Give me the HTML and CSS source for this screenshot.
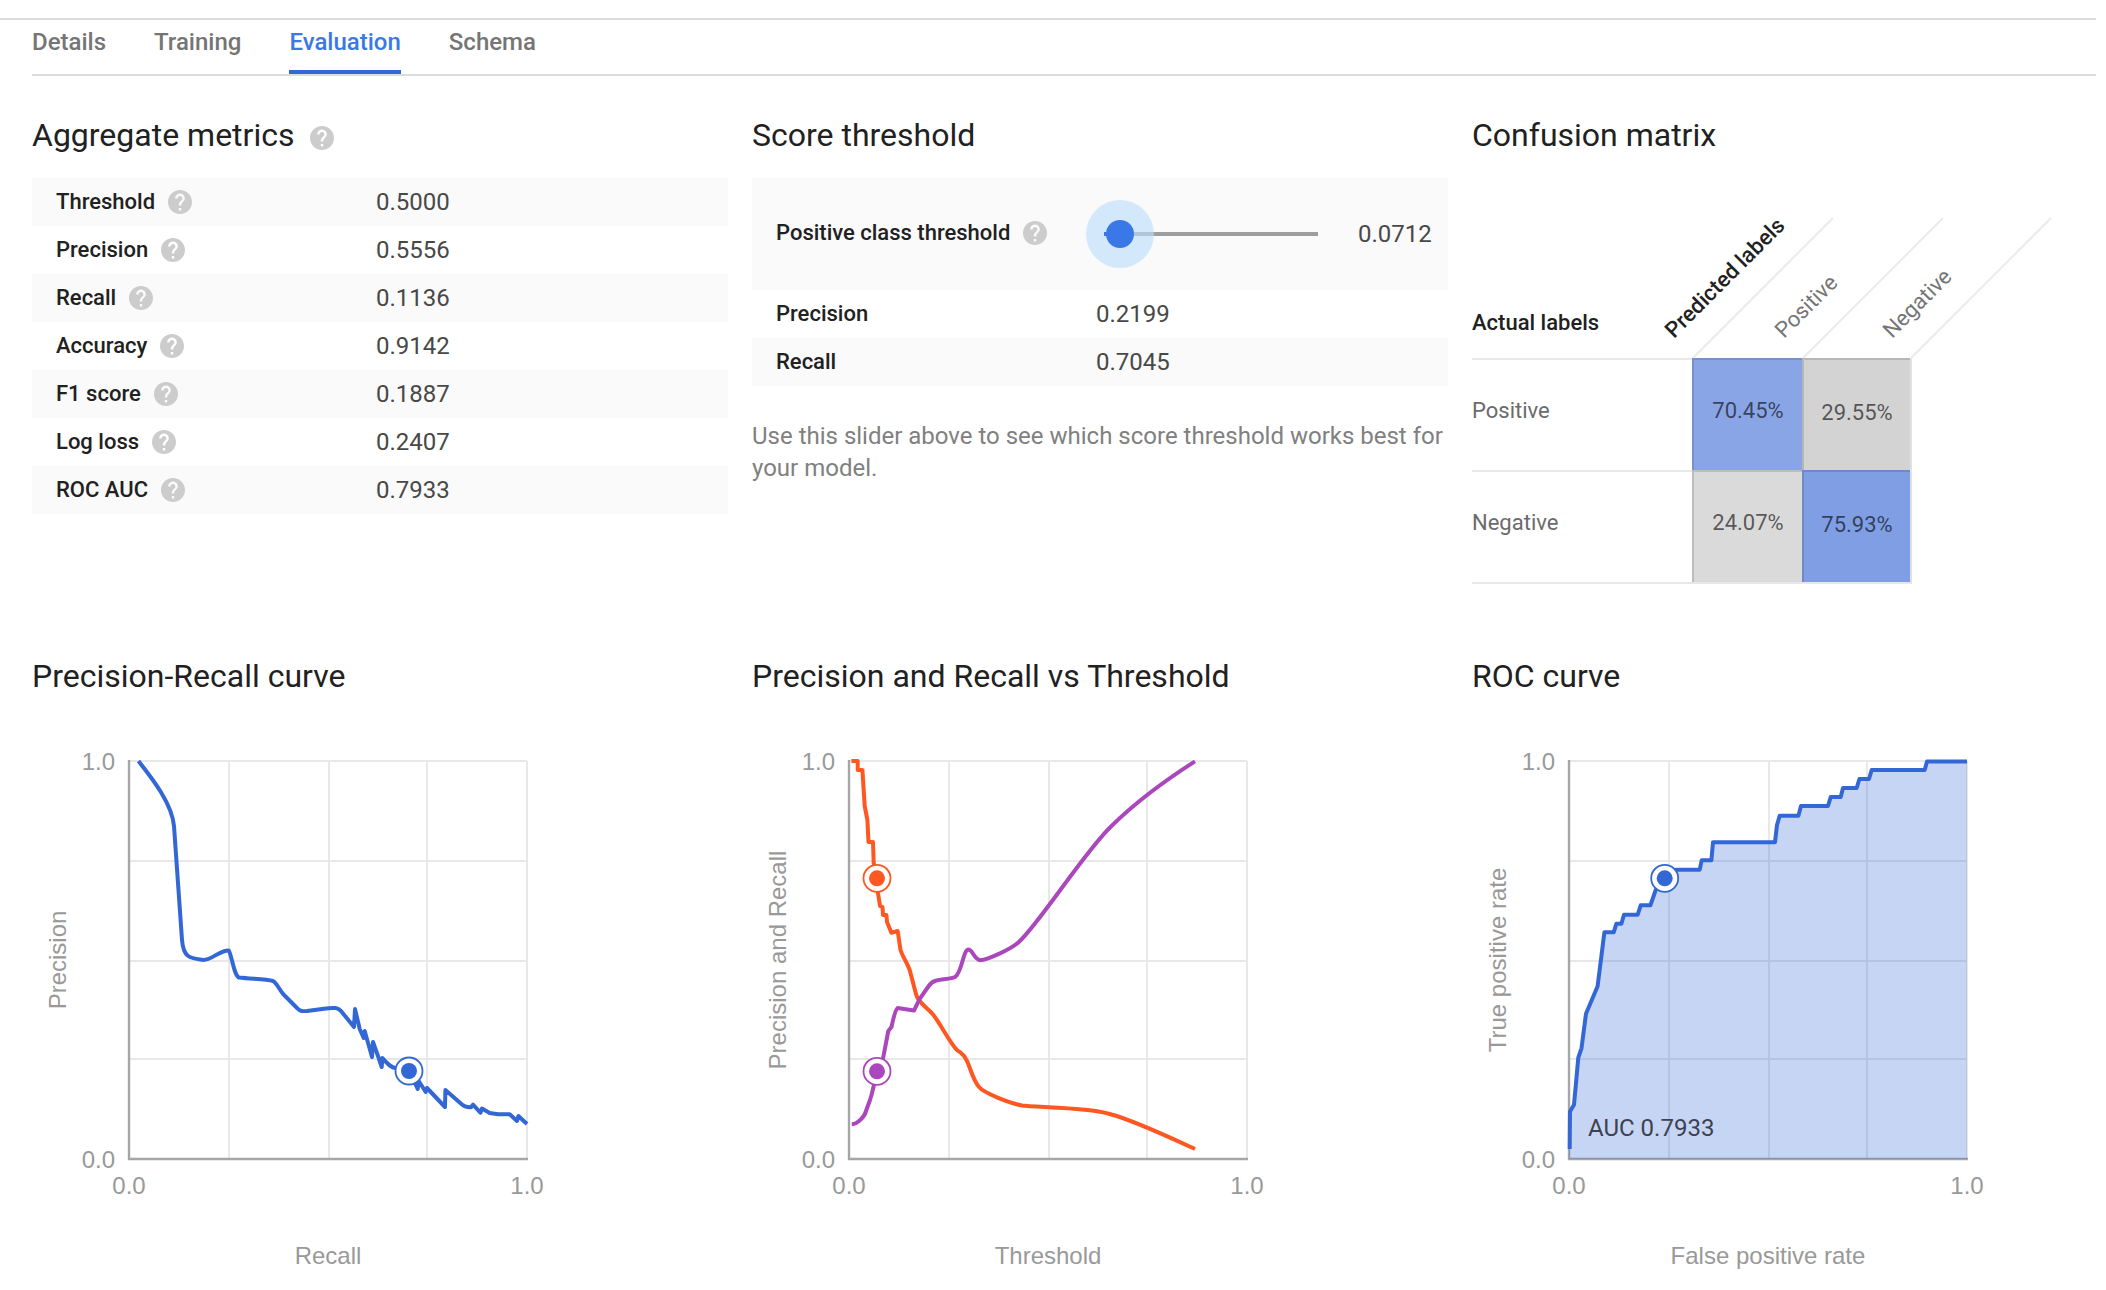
FILE: index.html
```html
<!DOCTYPE html>
<html lang="en">
<head>
<meta charset="utf-8">
<title>Model evaluation</title>
<link rel="stylesheet" href="styles.css">
</head>
<body>
<svg class="defs" aria-hidden="true">
  <symbol id="help" viewBox="2 2 20 20"><path d="M12 2C6.48 2 2 6.48 2 12s4.480 10 10 10 10-4.480 10-10S17.520 2 12 2zm1 17h-2v-2h2v2zm2.070-7.750l-.9.920C13.450 12.900 13 13.500 13 15h-2v-.5c0-1.100.45-2.100 1.170-2.830l1.240-1.260c.370-.360.590-.860.590-1.410 0-1.100-.9-2-2-2s-2 .9-2 2H8c0-2.210 1.790-4 4-4s4 1.790 4 4c0 .880-.360 1.680-.930 2.250z"/></symbol>
  <symbol id="plot" overflow="visible">
    <path class="grid" d="M0 0H398M0 100H398M0 200H398M0 298H398M100 0V398M200 0V398M298 0V398M398 0V398"/>
    <path class="axis" d="M0 -1V399M-1 398H399"/>
  </symbol>
</svg>

<main class="page">
  <nav class="tabs">
    <a class="tab">Details</a>
    <a class="tab">Training</a>
    <a class="tab active">Evaluation</a>
    <a class="tab">Schema</a>
  </nav>

  <div class="panels">
    <section>
      <h2>Aggregate metrics <svg class="help"><use href="#help"/></svg></h2>
      <dl class="table">
        <div class="row"><dt>Threshold <svg class="help"><use href="#help"/></svg></dt><dd>0.5000</dd></div>
        <div class="row"><dt>Precision <svg class="help"><use href="#help"/></svg></dt><dd>0.5556</dd></div>
        <div class="row"><dt>Recall <svg class="help"><use href="#help"/></svg></dt><dd>0.1136</dd></div>
        <div class="row"><dt>Accuracy <svg class="help"><use href="#help"/></svg></dt><dd>0.9142</dd></div>
        <div class="row"><dt>F1 score <svg class="help"><use href="#help"/></svg></dt><dd>0.1887</dd></div>
        <div class="row"><dt>Log loss <svg class="help"><use href="#help"/></svg></dt><dd>0.2407</dd></div>
        <div class="row"><dt>ROC AUC <svg class="help"><use href="#help"/></svg></dt><dd>0.7933</dd></div>
      </dl>
    </section>

    <section>
      <h2>Score threshold</h2>
      <dl class="table">
        <div class="row tall">
          <dt>Positive class threshold <svg class="help"><use href="#help"/></svg></dt>
          <dd class="slider-cell">
            <svg class="slider" viewBox="0 0 232 68">
              <path class="track" d="M18 34H232"/>
              <circle class="halo" cx="34" cy="34" r="34"/>
              <path class="filled" d="M18 34H34"/>
              <circle class="knob" cx="34" cy="34" r="14"/>
            </svg>
            <span>0.0712</span>
          </dd>
        </div>
        <div class="row"><dt>Precision</dt><dd>0.2199</dd></div>
        <div class="row"><dt>Recall</dt><dd>0.7045</dd></div>
      </dl>
      <p class="hint">Use this slider above to see which score threshold works best for your model.</p>
    </section>

    <section>
      <h2>Confusion matrix</h2>
      <div class="matrix">
        <svg class="matrix-head" viewBox="0 0 600 182">
          <path class="slant" d="M221 182L361 42M331 182L471 42M439 182L579 42"/>
          <text class="strong" x="0" y="154">Actual labels</text>
          <text class="strong" transform="translate(202 163) rotate(-45)">Predicted labels</text>
          <text transform="translate(312 163) rotate(-45)">Positive</text>
          <text transform="translate(420 163) rotate(-45)">Negative</text>
        </svg>
        <div class="matrix-row"><span class="name">Positive</span><span class="cell hit-70">70.45%</span><span class="cell last miss-29">29.55%</span></div>
        <div class="matrix-row"><span class="name">Negative</span><span class="cell miss-24">24.07%</span><span class="cell last hit-75">75.93%</span></div>
      </div>
    </section>
  </div>

  <div class="panels charts">
    <section>
      <h2>Precision-Recall curve</h2>
      <svg class="chart" viewBox="-97 -65 640 590">
        <use href="#plot"/>
        <path class="line blue" d="M9.500 0C22 16 43 42 45 65L53 179C54.500 196 60 197.500 74.300 199C83 199 90 189.400 99.600 189.400C102 191 105 215 110 216.500C122 218 137 218 144 220C148 222 151 230 154.600 233.500L168 247C171 250.500 174 250.300 178 250L195 247.700C206 246 209 247 212 250L225 266L226 248L230.700 268L234.700 277L235.700 270L243 296L244 281L249 295L252.700 306L253.400 297C259 303 262 307 267 307L280 310L288.700 328L289.700 320L296.700 331L298 327L316 346L316.400 329L333 343.500C336 346 339 346.500 342 346.300L344 343.700L351.400 351.700L353 347.500L360.700 352L369 353.300H380.700L388 360L389.400 355L398 363"/>
        <g class="marker blue" transform="translate(280 310)"><circle class="ring" r="13.500"/><circle class="dot" r="8"/></g>
        <text class="y-tick" x="-14" y="9">1.0</text>
        <text class="y-tick" x="-14" y="407">0.0</text>
        <text class="title" x="0" y="433">0.0</text>
        <text class="title" x="398" y="433">1.0</text>
        <text class="title" x="199" y="503">Recall</text>
        <text class="title" transform="translate(-63 199) rotate(-90)">Precision</text>
      </svg>
    </section>

    <section>
      <h2>Precision and Recall vs Threshold</h2>
      <svg class="chart" viewBox="-97 -65 640 590">
        <use href="#plot"/>
        <path class="line orange" d="M2.400 0H8.700V9H13.400L15.700 45L18.400 59L19.500 81H24L24.700 102L28 117L29 132L31 145L33.500 146L34 154H37.400L38 161L42.400 171.700L48.700 170L51.500 189C54 197 58 201 60.700 209L67 233C69 242 78 246 84 253.500C91 262 101 282 108 289C113 293 115 293 118 300C121 306 124 319 130 326C135 332 160 342 173 344.500C186 346.500 242 346 262.500 353.500C286 360 320 376 346 388"/>
        <path class="line purple" d="M2.800 363.300C9 363 16 355 17 350L21 339L22.500 334L28.200 311L34 297.600L39.300 270L42.500 266C44 259 46 249 48.600 247L65 249.600L70.400 238.400L79 226C81 223 83 220.800 86 220C93 217.500 101 218.500 106 216C113 212 114 188.600 119.500 188.600C124 189 125 198.500 131 199.200C139 199 162 188 169.600 181.200C190 163 236 90 262.500 65C288 40 320 17 346 .4"/>
        <g class="marker orange" transform="translate(28 117.300)"><circle class="ring" r="13.500"/><circle class="dot" r="8"/></g>
        <g class="marker purple" transform="translate(28 310.300)"><circle class="ring" r="13.500"/><circle class="dot" r="8"/></g>
        <text class="y-tick" x="-14" y="9">1.0</text>
        <text class="y-tick" x="-14" y="407">0.0</text>
        <text class="title" x="0" y="433">0.0</text>
        <text class="title" x="398" y="433">1.0</text>
        <text class="title" x="199" y="503">Threshold</text>
        <text class="title" transform="translate(-63 199) rotate(-90)">Precision and Recall</text>
      </svg>
    </section>

    <section>
      <h2>ROC curve</h2>
      <svg class="chart" viewBox="-97 -65 640 590">
        <use href="#plot"/>
        <path class="area" d="M0 398V388L1 350.600L5 343.700L7 322L9.300 296.700L12.500 287.300L17 252.700L28.600 225.300L35.400 171.300H44.700L47.400 162.700H52.400L55 153.700H68.700L71.700 144.300H81.400L86.700 129L95.700 117.300L107.400 108.700H130.700L132.700 99.300H142.400L144 81.300H206L208 64L210.700 54.700H229.400L232 45H259L261.700 36H271.700L274 27H287.700L290.400 18H300L302.700 9H355.700L358 0H398V398Z"/>
        <path class="line blue" d="M.7 388L1 350.600L5 343.700L7 322L9.300 296.700L12.500 287.300L17 252.700L28.600 225.300L35.400 171.300H44.700L47.400 162.700H52.400L55 153.700H68.700L71.700 144.300H81.400L86.700 129L95.700 117.300L107.400 108.700H130.700L132.700 99.300H142.400L144 81.300H206L208 64L210.700 54.700H229.400L232 45H259L261.700 36H271.700L274 27H287.700L290.400 18H300L302.700 9H355.700L358 .4H398"/>
        <g class="marker blue" transform="translate(95.700 117.300)"><circle class="ring" r="13.500"/><circle class="dot" r="8"/></g>
        <text class="auc" x="19" y="375">AUC 0.7933</text>
        <text class="y-tick" x="-14" y="9">1.0</text>
        <text class="y-tick" x="-14" y="407">0.0</text>
        <text class="title" x="0" y="433">0.0</text>
        <text class="title" x="398" y="433">1.0</text>
        <text class="title" x="199" y="503">False positive rate</text>
        <text class="title" transform="translate(-63 199) rotate(-90)">True positive rate</text>
      </svg>
    </section>
  </div>
</main>
</body>
</html>
```
FILE: styles.css
```css
* { box-sizing: border-box; }
body {
  margin: 0;
  padding-top: 18px;
  background: #fff;
  color: #212121;
  font-family: Roboto, sans-serif;
  font-size: 24px;
  overflow: hidden;
}
.defs { display: none; }
.page { width: 2096px; border-top: 2px solid #dcdcdc; }

.tabs {
  display: flex;
  gap: 48px;
  height: 56px;
  margin-left: 32px;
  border-bottom: 2px solid #dcdcdc;
}
.tab {
  height: 54px;
  padding-top: 6px;
  line-height: 32px;
  font-weight: 500;
  color: #757575;
}
.tab.active { color: #3b78e7; border-bottom: 4px solid #3367d6; }

.panels {
  display: grid;
  grid-template-columns: 696px 696px 624px;
  column-gap: 24px;
  height: 541px;
  padding: 39px 0 0 32px;
}
.charts { height: auto; }
h2 {
  display: flex;
  align-items: center;
  height: 40px;
  margin: 0;
  font-size: 32px;
  font-weight: 400;
  line-height: 40px;
}
.help { flex: none; width: 24px; height: 24px; margin-left: 13px; fill: #ccc; }
h2 .help { margin: 5px 0 0 16px; }

.table { margin: 23px 0 0; }
.row { display: flex; align-items: center; height: 48px; padding-left: 24px; }
.row:nth-child(odd) { background: #fafafa; }
.row dt {
  display: flex;
  align-items: center;
  width: 320px;
  height: 48px;
  font-size: 22px;
  font-weight: 500;
  line-height: 48px;
}
.row dd { margin: 0; color: #484848; line-height: 46px; }
.row.tall { height: 112px; }
.row.tall dt { width: 310px; padding-bottom: 2px; height: 50px; }
.slider-cell { display: flex; align-items: center; }
.slider { width: 232px; height: 68px; margin-right: 40px; }
.slider-cell span { line-height: 48px; }
.track { stroke: #9e9e9e; stroke-width: 4; }
.halo { fill: #bbdefb; fill-opacity: .62; }
.filled { stroke: #3b78e7; stroke-width: 4; }
.knob { fill: #3b78e7; }
.hint { margin: 34px 0 0; color: #808080; line-height: 32px; }

.matrix { width: 624px; margin-top: 21px; font-size: 22px; color: #6b6b6b; }
.matrix-head { display: block; width: 600px; height: 182px; overflow: visible; fill: #757575; }
.matrix-head .strong { fill: #212121; font-weight: 500; }
.slant { fill: none; stroke: #ebebeb; stroke-width: 2; }
.matrix-row {
  display: grid;
  grid-template-columns: 220px 110px 108px;
  width: 440px;
  height: 112px;
  border-top: 2px solid #e8e8e8;
  border-right: 2px solid #e0e0e0;
}
.matrix-row:last-child { height: 114px; border-bottom: 2px solid #e8e8e8; }
.name { line-height: 102px; }
.cell {
  margin-top: -2px;
  border: solid rgba(0, 0, 0, .13);
  border-width: 2px 0 0 2px;
  text-align: center;
  line-height: 102px;
  color: rgba(0, 0, 0, .62);
}
.cell.last { line-height: 106px; }
.hit-70 { background: #8aa5e6; }
.miss-29 { background: #d3d3d3; }
.miss-24 { background: #dadada; }
.hit-75 { background: #7f9ee4; }

.chart { display: block; width: 640px; height: 590px; overflow: visible; }
.chart text { font: 24px "Liberation Sans", Arial, sans-serif; fill: #999; }
.chart .title { text-anchor: middle; }
.chart .y-tick { text-anchor: end; }
.chart .auc { font-family: Roboto, sans-serif; fill: #3c4250; }
.grid { fill: none; stroke: #000; stroke-opacity: .09; stroke-width: 2; }
.axis { fill: none; stroke: #a6a6a6; stroke-width: 2.400; }
.line { fill: none; stroke: currentColor; stroke-width: 4; stroke-linejoin: round; }
.area { fill: #3367d6; fill-opacity: .28; }
.marker .ring { fill: #fff; stroke: currentColor; stroke-width: 1.800; }
.marker .dot { fill: currentColor; }
.blue { color: #3367d6; }
.orange { color: #ff5722; }
.purple { color: #ab47bc; }
```
